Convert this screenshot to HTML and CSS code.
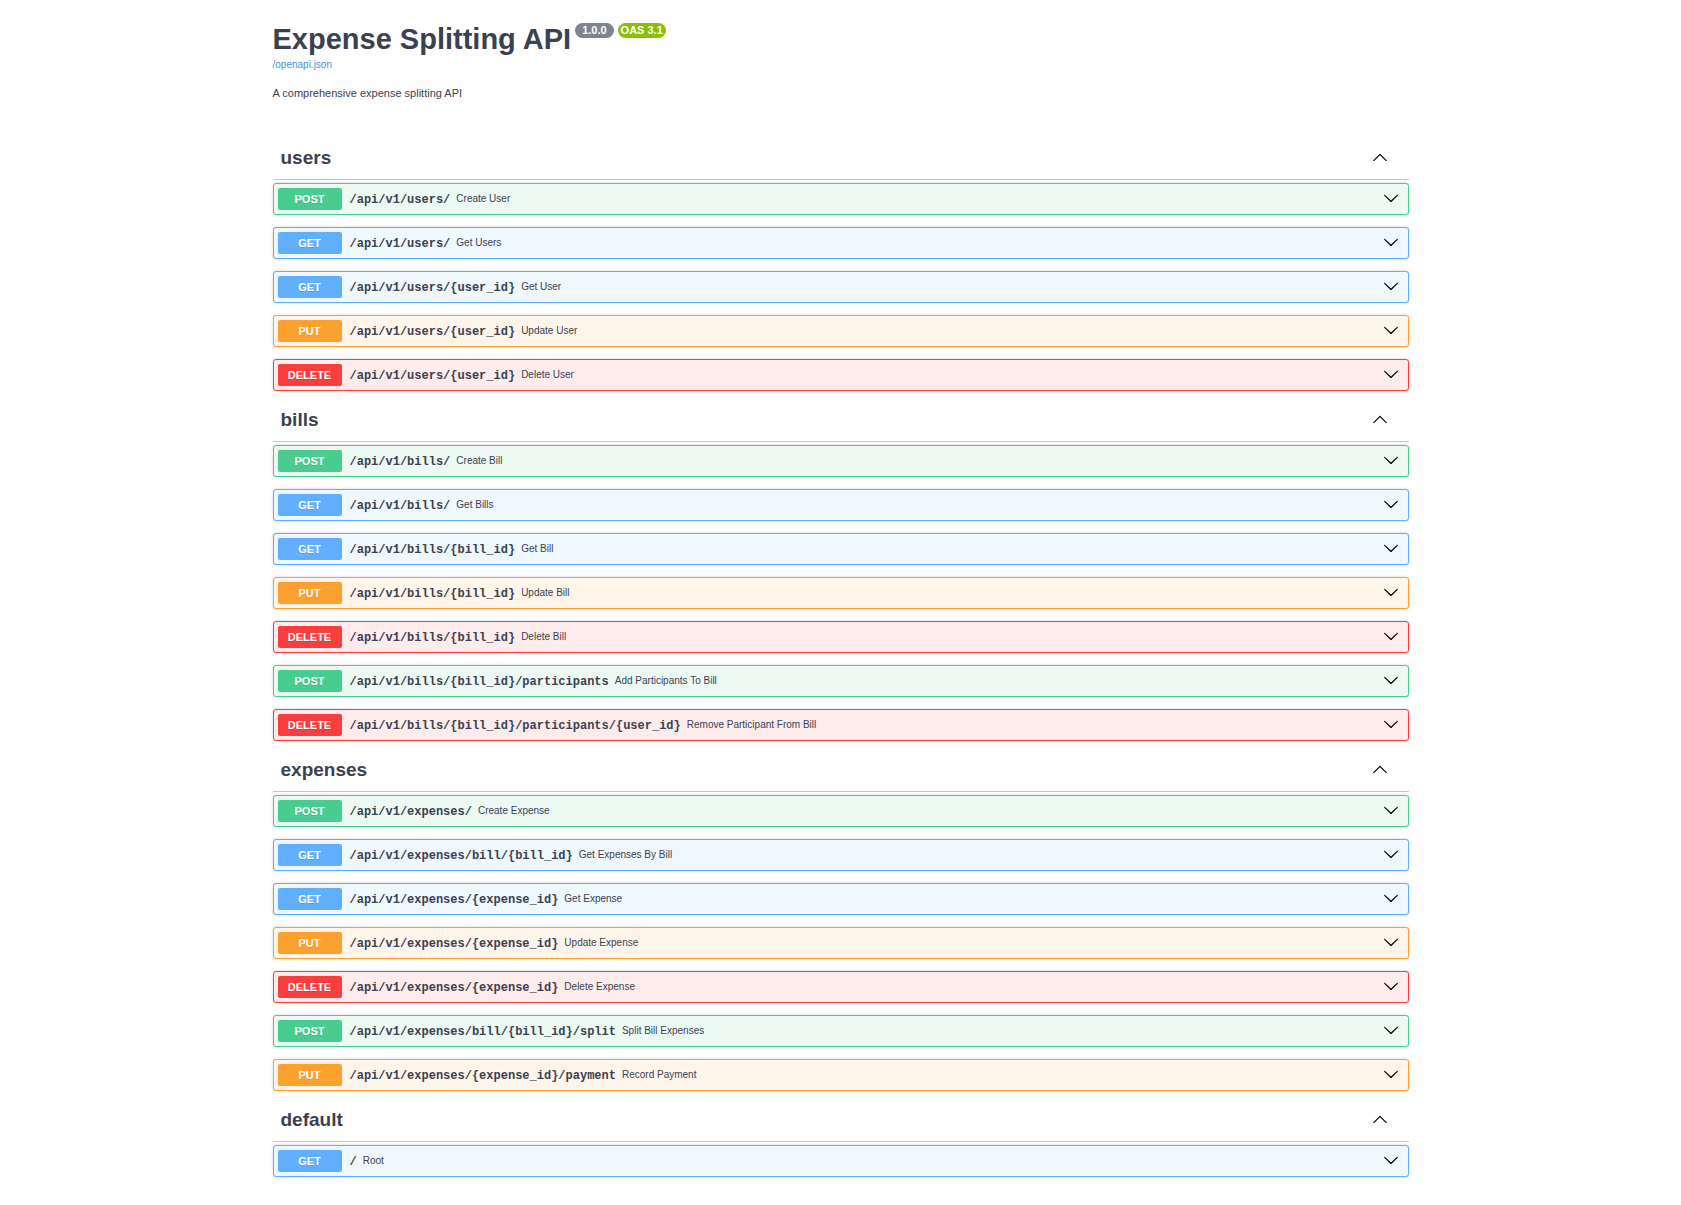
FILE: index.html
```html
<!DOCTYPE html>
<html lang="en">
<head>
<meta charset="utf-8">
<meta name="viewport" content="width=device-width, initial-scale=1">
<title>Expense Splitting API</title>
<link rel="stylesheet" href="styles.css">
</head>
<body>
<svg class="sprite" aria-hidden="true">
  <symbol id="down" viewBox="0 0 20 20"><path d="M17.418 6.109c.272-.268.709-.268.979 0s.271.701 0 .969l-7.908 7.83c-.27.268-.707.268-.979 0l-7.908-7.83c-.27-.268-.27-.701 0-.969s.709-.268.979 0L10 13.25z"/></symbol>
  <symbol id="up" viewBox="0 0 20 20"><path d="M17.418 14.908c.272.268.709.268.979 0s.271-.701 0-.969l-7.908-7.83c-.27-.268-.707-.268-.979 0l-7.908 7.83c-.27.268-.27.701 0 .969s.709.268.979 0L10 7.767z"/></symbol>
</svg>
<div class="wrapper">
  <header class="info">
    <div class="title-row">
      <h1 class="title">Expense Splitting API</h1>
      <span class="version">1.0.0</span>
      <span class="version version-oas">OAS 3.1</span>
    </div>
    <a class="spec-link" href="/openapi.json">/openapi.json</a>
    <p class="description">A comprehensive expense splitting API</p>
  </header>
  <main>
    <section class="tag">
      <h2 class="tag-title"><button class="tag-toggle" type="button" aria-expanded="true">users<svg class="arrow"><use href="#up"/></svg></button></h2>
      <div class="operations">
        <button class="op post" type="button"><span class="method">POST</span><span class="path">/api/v1/users/</span><span class="summary">Create User</span><svg class="arrow"><use href="#down"/></svg></button>
        <button class="op get" type="button"><span class="method">GET</span><span class="path">/api/v1/users/</span><span class="summary">Get Users</span><svg class="arrow"><use href="#down"/></svg></button>
        <button class="op get" type="button"><span class="method">GET</span><span class="path">/api/v1/users/{user_id}</span><span class="summary">Get User</span><svg class="arrow"><use href="#down"/></svg></button>
        <button class="op put" type="button"><span class="method">PUT</span><span class="path">/api/v1/users/{user_id}</span><span class="summary">Update User</span><svg class="arrow"><use href="#down"/></svg></button>
        <button class="op delete" type="button"><span class="method">DELETE</span><span class="path">/api/v1/users/{user_id}</span><span class="summary">Delete User</span><svg class="arrow"><use href="#down"/></svg></button>
      </div>
    </section>
    <section class="tag">
      <h2 class="tag-title"><button class="tag-toggle" type="button" aria-expanded="true">bills<svg class="arrow"><use href="#up"/></svg></button></h2>
      <div class="operations">
        <button class="op post" type="button"><span class="method">POST</span><span class="path">/api/v1/bills/</span><span class="summary">Create Bill</span><svg class="arrow"><use href="#down"/></svg></button>
        <button class="op get" type="button"><span class="method">GET</span><span class="path">/api/v1/bills/</span><span class="summary">Get Bills</span><svg class="arrow"><use href="#down"/></svg></button>
        <button class="op get" type="button"><span class="method">GET</span><span class="path">/api/v1/bills/{bill_id}</span><span class="summary">Get Bill</span><svg class="arrow"><use href="#down"/></svg></button>
        <button class="op put" type="button"><span class="method">PUT</span><span class="path">/api/v1/bills/{bill_id}</span><span class="summary">Update Bill</span><svg class="arrow"><use href="#down"/></svg></button>
        <button class="op delete" type="button"><span class="method">DELETE</span><span class="path">/api/v1/bills/{bill_id}</span><span class="summary">Delete Bill</span><svg class="arrow"><use href="#down"/></svg></button>
        <button class="op post" type="button"><span class="method">POST</span><span class="path">/api/v1/bills/{bill_id}/participants</span><span class="summary">Add Participants To Bill</span><svg class="arrow"><use href="#down"/></svg></button>
        <button class="op delete" type="button"><span class="method">DELETE</span><span class="path">/api/v1/bills/{bill_id}/participants/{user_id}</span><span class="summary">Remove Participant From Bill</span><svg class="arrow"><use href="#down"/></svg></button>
      </div>
    </section>
    <section class="tag">
      <h2 class="tag-title"><button class="tag-toggle" type="button" aria-expanded="true">expenses<svg class="arrow"><use href="#up"/></svg></button></h2>
      <div class="operations">
        <button class="op post" type="button"><span class="method">POST</span><span class="path">/api/v1/expenses/</span><span class="summary">Create Expense</span><svg class="arrow"><use href="#down"/></svg></button>
        <button class="op get" type="button"><span class="method">GET</span><span class="path">/api/v1/expenses/bill/{bill_id}</span><span class="summary">Get Expenses By Bill</span><svg class="arrow"><use href="#down"/></svg></button>
        <button class="op get" type="button"><span class="method">GET</span><span class="path">/api/v1/expenses/{expense_id}</span><span class="summary">Get Expense</span><svg class="arrow"><use href="#down"/></svg></button>
        <button class="op put" type="button"><span class="method">PUT</span><span class="path">/api/v1/expenses/{expense_id}</span><span class="summary">Update Expense</span><svg class="arrow"><use href="#down"/></svg></button>
        <button class="op delete" type="button"><span class="method">DELETE</span><span class="path">/api/v1/expenses/{expense_id}</span><span class="summary">Delete Expense</span><svg class="arrow"><use href="#down"/></svg></button>
        <button class="op post" type="button"><span class="method">POST</span><span class="path">/api/v1/expenses/bill/{bill_id}/split</span><span class="summary">Split Bill Expenses</span><svg class="arrow"><use href="#down"/></svg></button>
        <button class="op put" type="button"><span class="method">PUT</span><span class="path">/api/v1/expenses/{expense_id}/payment</span><span class="summary">Record Payment</span><svg class="arrow"><use href="#down"/></svg></button>
      </div>
    </section>
    <section class="tag">
      <h2 class="tag-title"><button class="tag-toggle" type="button" aria-expanded="true">default<svg class="arrow"><use href="#up"/></svg></button></h2>
      <div class="operations">
        <button class="op get" type="button"><span class="method">GET</span><span class="path">/</span><span class="summary">Root</span><svg class="arrow"><use href="#down"/></svg></button>
      </div>
    </section>
  </main>
</div>
</body>
</html>
```
FILE: styles.css
```css
*, *::before, *::after { box-sizing: border-box; }

body {
  margin: 0;
  background: #fff;
  color: #3b4151;
  font-family: "Liberation Sans", Arial, sans-serif;
}

button {
  border: 0;
  background: none;
  color: inherit;
  font: inherit;
  text-align: left;
  cursor: pointer;
}

.sprite { display: none; }

.wrapper {
  max-width: 1168px;
  margin: 0 auto;
  padding: 22px 16px;
}

.info { padding-bottom: 40px; }

.title-row {
  display: flex;
  align-items: flex-start;
  gap: 4px;
  padding-bottom: 2px;
}

.title {
  margin: 0;
  font-size: 29px;
  line-height: 34px;
}

.version {
  margin-top: 1px;
  padding: 0 7px;
  border-radius: 16px;
  background: #7d8492;
  color: #fff;
  font-size: 11px;
  font-weight: 700;
  line-height: 15px;
}

.version-oas {
  padding: 0 3px;
  background: #89bf04;
}

.spec-link {
  display: block;
  color: #4990e2;
  font-size: 10px;
  line-height: 14px;
  text-decoration: none;
}

.description {
  margin: 14px 0 0;
  font-size: 11px;
  line-height: 15px;
}

.tag-title {
  margin: 0;
  border-bottom: 1px solid rgba(59, 65, 81, .3);
  font-size: 19px;
  line-height: 24px;
}

.tag-toggle {
  display: flex;
  align-items: center;
  justify-content: space-between;
  width: 100%;
  padding: 5px 21px 9px 8px;
}

.operations {
  display: grid;
  gap: 12px;
  padding: 3px 0 12px;
}

.op {
  display: flex;
  align-items: center;
  gap: 6px;
  padding: 4px 9px 4px 4px;
  border: 1px solid;
  border-radius: 3px;
  box-shadow: 0 0 3px rgba(0, 0, 0, .19);
}

.method {
  width: 64px;
  margin-right: 2px;
  border-radius: 2px;
  color: #fff;
  font-size: 11px;
  font-weight: 700;
  line-height: 22px;
  text-align: center;
  text-shadow: 0 1px 0 rgba(0, 0, 0, .1);
}

.path {
  padding-top: 2px;
  font-family: "Liberation Mono", monospace;
  font-size: 12px;
  font-weight: 700;
  line-height: 16px;
}

.summary {
  flex: 1;
  font-size: 10px;
  line-height: 16px;
}

.arrow {
  width: 16px;
  height: 16px;
  margin-bottom: 3px;
  fill: #000;
}

.post { border-color: #49cc90; background: #edfaf4; }
.post .method { background: #49cc90; }
.get { border-color: #61affe; background: #eff7ff; }
.get .method { background: #61affe; }
.put { border-color: #fca130; background: #fff5ea; }
.put .method { background: #fca130; }
.delete { border-color: #f93e3e; background: #feebeb; }
.delete .method { background: #f93e3e; }
```
